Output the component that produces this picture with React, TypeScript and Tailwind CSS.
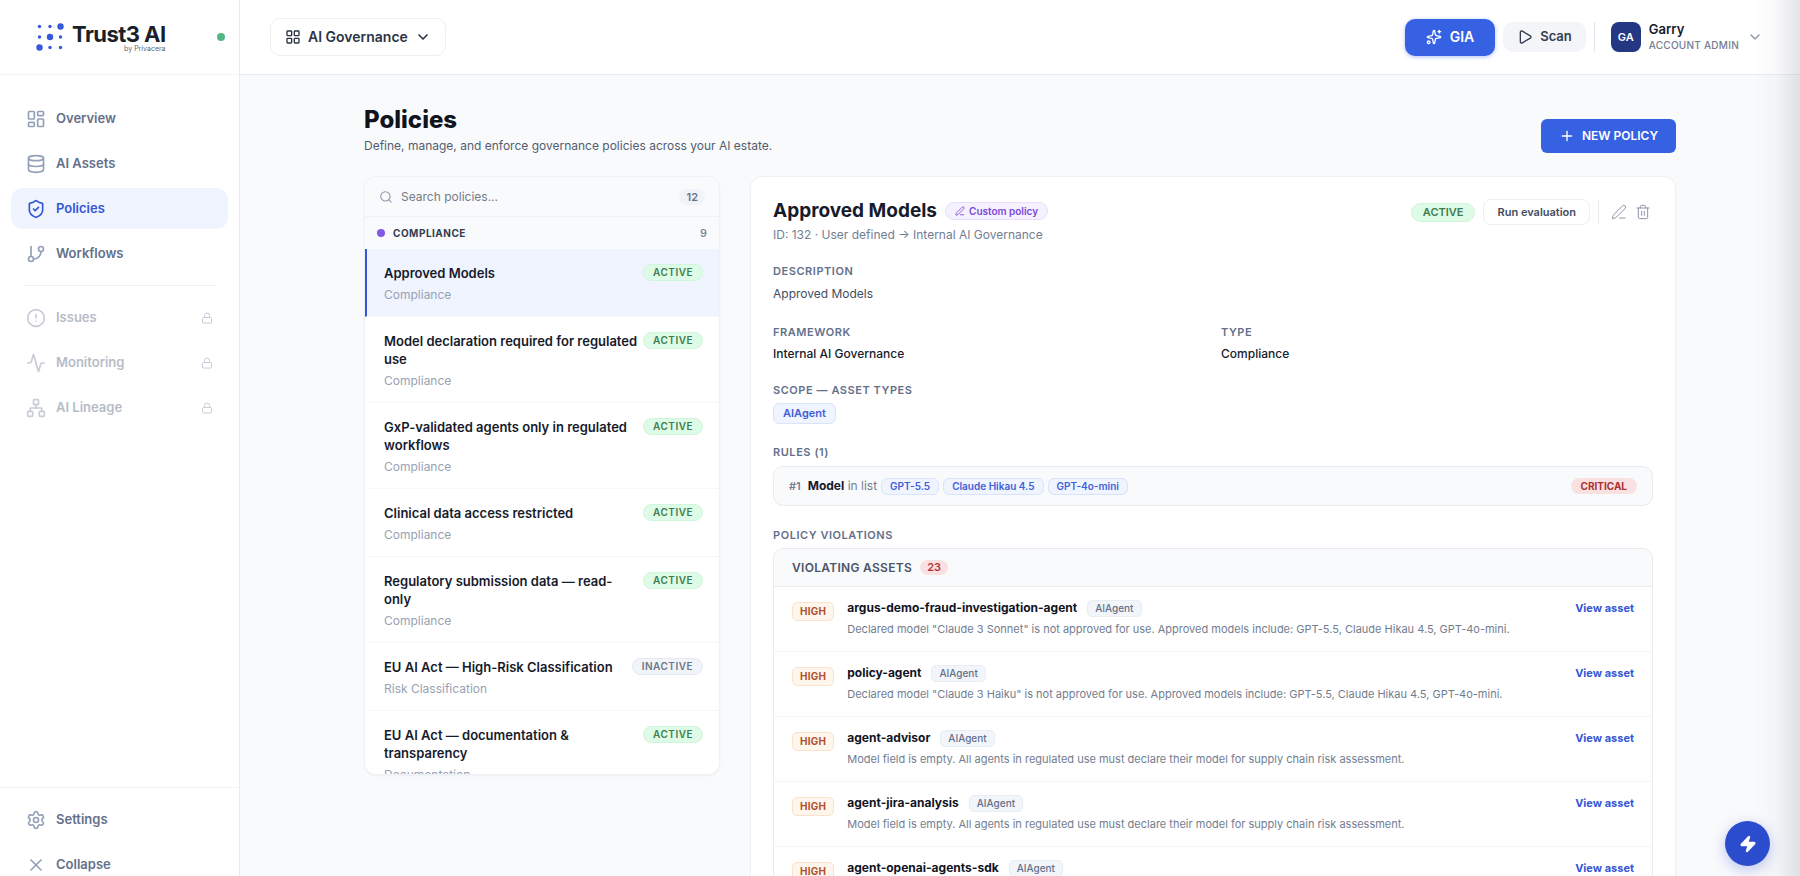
import React from 'react';
import {
  Activity,
  ChevronDown,
  CircleAlert,
  Database,
  GitBranch,
  LayoutDashboard,
  LayoutGrid,
  Lock,
  Network,
  PenLine,
  Play,
  Plus,
  Search,
  Settings,
  ShieldCheck,
  Sparkles,
  Trash2,
  X,
  Zap,
} from 'lucide-react';
import type { LucideIcon } from 'lucide-react';

type NavEntry = { label: string; icon: LucideIcon; active?: boolean; locked?: boolean };

const mainNav: NavEntry[] = [
  { label: 'Overview', icon: LayoutDashboard },
  { label: 'AI Assets', icon: Database },
  { label: 'Policies', icon: ShieldCheck, active: true },
  { label: 'Workflows', icon: GitBranch },
];

const lockedNav: NavEntry[] = [
  { label: 'Issues', icon: CircleAlert, locked: true },
  { label: 'Monitoring', icon: Activity, locked: true },
  { label: 'AI Lineage', icon: Network, locked: true },
];

const footerNav: NavEntry[] = [
  { label: 'Settings', icon: Settings },
  { label: 'Collapse', icon: X },
];

const policies = [
  { name: 'Approved Models', category: 'Compliance', active: true, selected: true },
  { name: 'Model declaration required for regulated use', category: 'Compliance', active: true },
  { name: 'GxP-validated agents only in regulated workflows', category: 'Compliance', active: true },
  { name: 'Clinical data access restricted', category: 'Compliance', active: true },
  { name: 'Regulatory submission data — read-only', category: 'Compliance', active: true },
  { name: 'EU AI Act — High-Risk Classification', category: 'Risk Classification', active: false },
  { name: 'EU AI Act — documentation & transparency', category: 'Documentation', active: true },
];

const emptyModel =
  'Model field is empty. All agents in regulated use must declare their model for supply chain risk assessment.';

const notApproved = (model: string) =>
  `Declared model "${model}" is not approved for use. Approved models include: GPT-5.5, Claude Hikau 4.5, GPT-4o-mini.`;

const violations = [
  { asset: 'argus-demo-fraud-investigation-agent', detail: notApproved('Claude 3 Sonnet') },
  { asset: 'policy-agent', detail: notApproved('Claude 3 Haiku') },
  { asset: 'agent-advisor', detail: emptyModel },
  { asset: 'agent-jira-analysis', detail: emptyModel },
  { asset: 'agent-openai-agents-sdk', detail: emptyModel },
];

const ruleModels = ['GPT-5.5', 'Claude Hikau 4.5', 'GPT-4o-mini'];

const Logo: React.FC = () => (
  <a href="#" className="flex items-center gap-2">
    <svg width="28" height="28" viewBox="0 0 28 28" fill="#3558dc" aria-hidden="true">
      <circle cx="3.5" cy="3.5" r="1.7" />
      <circle cx="14" cy="3.5" r="1.7" />
      <circle cx="24.5" cy="3.5" r="3.2" />
      <circle cx="3.5" cy="14" r="1.7" />
      <circle cx="14" cy="14" r="3.2" />
      <circle cx="24.5" cy="14" r="1.7" />
      <circle cx="3.5" cy="24.5" r="3.2" />
      <circle cx="14" cy="24.5" r="1.7" />
      <circle cx="24.5" cy="24.5" r="1.7" />
    </svg>
    <span className="flex flex-col items-end">
      <span className="text-[22px] leading-[22px] font-bold tracking-tight text-[#1b1f2b]">Trust3 AI</span>
      <span className="text-[7px] leading-[7px] text-[#5f6570]">by Privacera</span>
    </span>
  </a>
);

const NavItem: React.FC<{ item: NavEntry }> = ({ item }) => {
  const Icon = item.icon;
  const tone = item.active
    ? 'bg-[#eff4fe] text-[#3457d5]'
    : item.locked
      ? 'text-[#b6bcc7]'
      : 'text-[#64708a]';
  const iconTone = item.active ? 'text-[#3457d5]' : item.locked ? 'text-[#c8ccd6]' : 'text-[#94a0b8]';

  return (
    <a href="#" className={`flex h-[41px] items-center gap-[10px] rounded-xl px-[15px] text-[13px] font-semibold ${tone}`}>
      <Icon className={`size-5 ${iconTone}`} />
      <span className="flex-1">{item.label}</span>
      {item.locked && <Lock className="size-3 text-[#c8ccd6]" />}
    </a>
  );
};

const Sidebar: React.FC = () => (
  <aside className="flex h-[calc(100vh+20px)] w-60 shrink-0 flex-col border-r border-[#e8ebf0] bg-white">
    <div className="flex h-[75px] shrink-0 items-center justify-between border-b border-[#f1f3f6] pr-[14px] pl-9">
      <Logo />
      <span className="size-2 rounded-full bg-[#55b685]" />
    </div>
    <nav className="flex flex-1 flex-col gap-1 px-[11px] pt-[23px]">
      {mainNav.map((item) => (
        <NavItem key={item.label} item={item} />
      ))}
      <hr className="mx-3 my-[7px] border-[#eceef2]" />
      {lockedNav.map((item) => (
        <NavItem key={item.label} item={item} />
      ))}
    </nav>
    <div className="flex flex-col gap-1 border-t border-[#f1f3f6] px-[11px] py-[11px]">
      {footerNav.map((item) => (
        <NavItem key={item.label} item={item} />
      ))}
    </div>
  </aside>
);

const Header: React.FC = () => (
  <header className="flex h-[75px] shrink-0 items-center justify-between border-b border-[#e8ebf0] bg-white pr-[37px] pl-[30px]">
    <button className="flex h-[38px] items-center gap-[7px] rounded-[10px] border border-[#eceef2] px-[14px] text-sm font-semibold text-[#2b3445]">
      <LayoutGrid className="size-4" />
      AI Governance
      <ChevronDown className="size-4" strokeWidth={2.5} />
    </button>
    <div className="flex items-center gap-2">
      <button className="flex h-[37px] items-center gap-2 rounded-[10px] bg-[#3661e2] px-[21px] text-sm font-semibold text-white shadow-[0_1px_4px_#3661e266]">
        <Sparkles className="size-4" />
        GIA
      </button>
      <button className="flex h-[30px] items-center gap-[7px] rounded-[10px] bg-[#f3f5f9] px-[14px] text-[13px] font-semibold text-[#333d4f]">
        <Play className="size-4" />
        Scan
      </button>
      <span className="h-[30px] w-px bg-[#e2e5eb]" />
      <button className="ml-2 flex items-center gap-2 text-left">
        <span className="grid size-[30px] place-items-center rounded-lg bg-[#233783] text-[11px] font-semibold text-white">
          GA
        </span>
        <span className="flex flex-col">
          <span className="text-[13px] leading-4 font-semibold text-[#161b2b]">Garry</span>
          <span className="text-[10px] leading-4 font-medium tracking-wide text-[#727d90]">ACCOUNT ADMIN</span>
        </span>
        <ChevronDown className="size-4 text-[#8b95a7]" />
      </button>
    </div>
  </header>
);

const PolicyList: React.FC = () => (
  <section className="h-[599px] w-[356px] shrink-0 overflow-hidden rounded-xl border border-[#eff1f5] bg-white shadow-xs">
    <label className="flex h-10 items-center gap-2 border-b border-[#eff1f5] bg-[#f9fafc] px-[14px]">
      <Search className="size-[14px] text-[#8b95a7]" strokeWidth={1.75} />
      <input
        type="text"
        aria-label="Search policies"
        placeholder="Search policies..."
        className="min-w-0 flex-1 bg-transparent text-[12px] outline-none placeholder:text-[#757b86]"
      />
      <span className="rounded-full bg-[#f0f3f8] px-[7px] text-[11px] leading-4 font-semibold text-[#64708a]">12</span>
    </label>
    <div className="flex h-8 items-center gap-2 bg-[#f9fafc] px-3">
      <span className="size-2 rounded-full bg-[#8257e6]" />
      <h2 className="flex-1 text-[10px] font-bold tracking-wider text-[#333d4f]">COMPLIANCE</h2>
      <span className="text-[11px] font-medium text-[#727d90]">9</span>
    </div>
    <ul>
      {policies.map((policy) => (
        <li
          key={policy.name}
          className={`flex items-start justify-between gap-1 border-b border-l-2 border-b-[#f6f7f9] pt-[15px] pr-4 pb-[13px] pl-[17px] ${
            policy.selected ? 'border-l-[#3457d5] bg-[#eff4fe]' : 'border-l-transparent'
          }`}
        >
          <div>
            <h3 className="text-[13px] leading-[18px] font-semibold text-[#161b2b]">{policy.name}</h3>
            <p className="mt-[5px] text-[12px] leading-4 text-[#98a2b4]">{policy.category}</p>
          </div>
          <span
            className={`rounded-full border px-[9px] text-[10px] leading-[15px] font-semibold tracking-wider ${
              policy.active
                ? 'border-[#cff5da] bg-[#ddfbe6] text-[#3f7d50]'
                : 'border-[#e4e8ef] bg-[#f1f4f9] text-[#6c778b]'
            }`}
          >
            {policy.active ? 'ACTIVE' : 'INACTIVE'}
          </span>
        </li>
      ))}
    </ul>
  </section>
);

const FieldLabel: React.FC<{ children: React.ReactNode }> = ({ children }) => (
  <h3 className="text-[11px] leading-4 font-semibold tracking-wider text-[#64708a]">{children}</h3>
);

const PolicyDetail: React.FC = () => (
  <section className="min-w-0 flex-1 rounded-xl border border-[#eff1f5] bg-white px-[22px] pt-[22px] pb-6 shadow-xs">
    <div className="flex items-start justify-between">
      <div>
        <div className="flex items-center gap-2">
          <h2 className="text-[19px] leading-6 font-bold text-[#161b2b]">Approved Models</h2>
          <span className="flex items-center gap-1 rounded-full border border-[#e6defa] bg-[#f5f1fe] px-[9px] text-[10px] leading-4 font-semibold text-[#7a48d6]">
            <PenLine className="size-[10px]" />
            Custom policy
          </span>
        </div>
        <p className="mt-1 text-[12px] leading-4 text-[#727d90]">ID: 132 · User defined → Internal AI Governance</p>
      </div>
      <div className="flex items-center gap-2">
        <span className="rounded-full border border-[#cff5da] bg-[#ddfbe6] px-[11px] text-[11px] leading-[17px] font-semibold text-[#3f7d50]">
          ACTIVE
        </span>
        <button className="h-[26px] rounded-lg border border-[#eceef2] px-[13px] text-[11px] font-semibold text-[#434d60]">
          Run evaluation
        </button>
        <span className="h-6 w-px bg-[#e8ebf0]" />
        <button aria-label="Edit policy" className="ml-1 text-[#8b95a7]">
          <PenLine className="size-4" strokeWidth={1.5} />
        </button>
        <button aria-label="Delete policy" className="mr-[2px] text-[#8b95a7]">
          <Trash2 className="size-4" strokeWidth={1.5} />
        </button>
      </div>
    </div>

    <div className="mt-5">
      <FieldLabel>DESCRIPTION</FieldLabel>
      <p className="mt-[5px] text-[12px] leading-5 text-[#434d60]">Approved Models</p>
    </div>

    <div className="mt-5 grid grid-cols-2 gap-4">
      <div>
        <FieldLabel>FRAMEWORK</FieldLabel>
        <p className="mt-1 text-[12px] leading-5 font-medium text-[#161b2b]">Internal AI Governance</p>
      </div>
      <div>
        <FieldLabel>TYPE</FieldLabel>
        <p className="mt-1 text-[12px] leading-5 font-medium text-[#161b2b]">Compliance</p>
      </div>
    </div>

    <div className="mt-[18px]">
      <FieldLabel>SCOPE — ASSET TYPES</FieldLabel>
      <div className="mt-[5px] flex">
        <span className="rounded-md border border-[#d9e4fb] bg-[#eff4fe] px-[9px] text-[11px] leading-[19px] font-semibold text-[#3f5fd8]">
          AIAgent
        </span>
      </div>
    </div>

    <div className="mt-5">
      <FieldLabel>RULES (1)</FieldLabel>
      <div className="mt-[6px] flex h-10 items-center rounded-[10px] border border-[#e8ebf0] bg-[#f9fafc] px-[15px]">
        <span className="text-[11px] font-semibold text-[#727d90]">#1</span>
        <p className="ml-[7px] text-[12px] text-[#727d90]">
          <strong className="font-bold text-[#161b2b]">Model</strong> in list
        </p>
        <div className="ml-1 flex flex-1 gap-1">
          {ruleModels.map((model) => (
            <span
              key={model}
              className="rounded-md border border-[#d9e4fb] bg-[#eff4fe] px-2 text-[10px] leading-[15px] font-semibold text-[#3f5fd8]"
            >
              {model}
            </span>
          ))}
        </div>
        <span className="rounded-full bg-[#fae1e1] px-[10px] text-[10px] leading-4 font-bold text-[#a83232]">CRITICAL</span>
      </div>
    </div>

    <div className="mt-[21px]">
      <FieldLabel>POLICY VIOLATIONS</FieldLabel>
      <div className="mt-[5px] overflow-hidden rounded-[10px] border border-[#e8ebf0]">
        <div className="flex h-[38px] items-center gap-2 border-b border-[#e8ebf0] bg-[#f9fafc] px-[18px]">
          <h4 className="text-[12px] font-semibold tracking-wide text-[#4b5568]">VIOLATING ASSETS</h4>
          <span className="rounded-full bg-[#fae1e1] px-[7px] text-[11px] leading-[15px] font-semibold text-[#b03535]">23</span>
        </div>
        <ul>
          {violations.map((violation) => (
            <li key={violation.asset} className="flex h-[65px] items-start gap-[13px] border-b border-[#f3f5f8] px-[18px] pt-3">
              <span className="mt-[3px] rounded-[5px] border border-[#fbe3cb] bg-[#fef6ec] px-[7px] text-[10px] leading-[17px] font-bold tracking-wide text-[#b2502c]">
                HIGH
              </span>
              <div className="min-w-0 flex-1">
                <div className="flex items-center gap-[10px]">
                  <h5 className="text-[12px] leading-[18px] font-bold text-[#10141f]">{violation.asset}</h5>
                  <span className="rounded-[5px] border border-[#e8edf4] bg-[#f2f5fa] px-[7px] text-[10px] leading-[15px] font-medium text-[#64708a]">
                    AIAgent
                  </span>
                </div>
                <p className="mt-1 text-[11px] leading-4 text-[#727d90]">{violation.detail}</p>
              </div>
              <a href="#" className="mt-px text-[11px] leading-4 font-bold text-[#3457d5]">
                View asset
              </a>
            </li>
          ))}
        </ul>
      </div>
    </div>
  </section>
);

export default function App() {
  return (
    <div className="relative flex h-screen overflow-hidden bg-[#f9fafc] font-[Inter,sans-serif]">
      <Sidebar />
      <div className="flex min-w-0 flex-1 flex-col">
        <Header />
        <main className="flex-1 overflow-hidden px-6 pt-[29px]">
          <div className="mx-auto max-w-[1312px]">
            <div className="flex items-center justify-between">
              <div>
                <h1 className="text-2xl leading-8 font-extrabold text-[#10141f]">Policies</h1>
                <p className="text-[12px] leading-5 text-[#535d6f]">
                  Define, manage, and enforce governance policies across your AI estate.
                </p>
              </div>
              <button className="mt-3 flex h-[34px] items-center gap-[7px] rounded-md bg-[#3661e2] px-[18px] text-[12px] font-semibold text-white">
                <Plus className="size-4" />
                NEW POLICY
              </button>
            </div>
            <div className="mt-5 flex items-start gap-[30px]">
              <PolicyList />
              <PolicyDetail />
            </div>
          </div>
        </main>
      </div>

      {/* Soft shade along the right window edge */}
      <div className="pointer-events-none absolute inset-y-0 right-0 w-12 bg-linear-to-r from-transparent via-[#8c91a00d] to-[#8c91a040]" />

      <button
        aria-label="Quick actions"
        className="absolute right-[30px] bottom-[10px] grid size-[45px] place-items-center rounded-full bg-[#2b4dcd] text-white shadow-[0_4px_14px_#2b4dcd4d]"
      >
        <Zap className="size-[18px] fill-current" />
      </button>
    </div>
  );
}
